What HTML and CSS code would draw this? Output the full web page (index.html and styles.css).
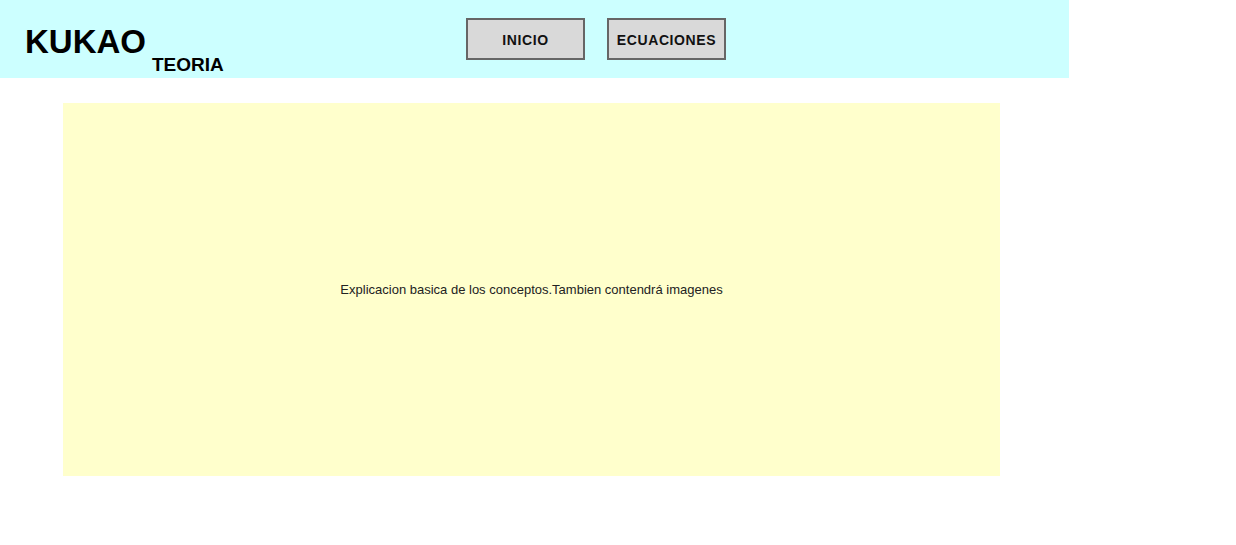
FILE: index.html
```html
<!DOCTYPE html>
<html lang="es">
<head>
<meta charset="utf-8">
<title>KUKAO Teoria</title>
<link rel="stylesheet" href="styles.css">
</head>
<body>
<header class="top">
  <div class="brand">
    <span class="logo">KUKAO</span>
    <span class="section">TEORIA</span>
  </div>
  <nav class="nav">
    <a class="btn" href="#">INICIO</a>
    <a class="btn" href="#">ECUACIONES</a>
  </nav>
</header>
<main class="content">
  <p class="text">Explicacion basica de los conceptos.Tambien contendrá imagenes</p>
</main>
</body>
</html>
```
FILE: styles.css
```css
html, body {
  margin: 0;
  padding: 0;
  background: #ffffff;
  font-family: "Liberation Sans", Arial, sans-serif;
}
.top {
  width: 1069px;
  height: 78px;
  background: #ccffff;
  display: flex;
  align-items: flex-start;
  box-sizing: border-box;
}
.brand {
  display: flex;
  align-items: baseline;
  padding-left: 25px;
  width: 466px;
  box-sizing: border-box;
  padding-top: 23px;
}
.logo {
  font-size: 33px;
  font-weight: bold;
  color: #000;
  line-height: 38px;
}
.section {
  font-size: 19px;
  font-weight: bold;
  color: #000;
  margin-left: 6px;
  position: relative;
  top: 18px;
}
.nav {
  display: flex;
  gap: 22px;
  padding-top: 18px;
}
.btn {
  display: flex;
  align-items: center;
  justify-content: center;
  width: 119px;
  height: 42px;
  padding-top: 2px;
  box-sizing: border-box;
  background: #d9d9d9;
  border: 2px solid #666666;
  color: #111;
  font-size: 14px;
  font-weight: bold;
  letter-spacing: 0.6px;
  text-decoration: none;
}
.content {
  margin: 25px 0 0 63px;
  width: 937px;
  height: 373px;
  background: #ffffcc;
  display: flex;
  align-items: center;
  justify-content: center;
}
.text {
  margin: 0;
  font-size: 13px;
  color: #222;
}
```
